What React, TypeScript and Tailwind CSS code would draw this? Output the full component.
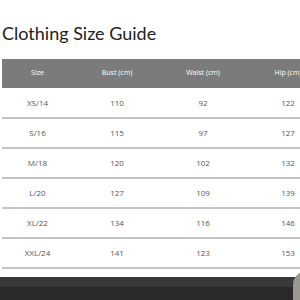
import React from "react";

const rows = [
  ["XS/14", "110", "92", "122"],
  ["S/16", "115", "97", "127"],
  ["M/18", "120", "102", "132"],
  ["L/20", "127", "109", "139"],
  ["XL/22", "134", "116", "146"],
  ["XXL/24", "141", "123", "153"],
];

const widths = ["w-[71px]", "w-[88px]", "w-[84px]", "w-[86px]"];

export default function App() {
  return (
    <div className="w-[300px] h-[300px] overflow-hidden bg-white flex flex-col" style={{ fontFamily: "'Open Sans', 'Noto Sans', sans-serif" }}>
      <div className="h-[20px]" />
      <div className="pl-[2px] h-[26px] flex items-center text-[18px] leading-none text-[#222]" style={{ fontFamily: "Lato, 'Open Sans', sans-serif" }}>
        Clothing Size Guide
      </div>
      <div className="h-[13px]" />
      <div className="ml-[2px] w-[340px] flex flex-col">
        <div className="flex h-[29px] bg-[#7b7b7b] text-white text-[7px] items-center">
          {["Size", "Bust (cm)", "Waist (cm)", "Hip (cm)"].map((h, i) => (
            <div key={h} className={`${widths[i]} shrink-0 text-center`}>{h}</div>
          ))}
        </div>
        {rows.map((r, idx) => (
          <div key={r[0]} className={`flex ${idx === 0 ? "h-[31px]" : "h-[30px]"} items-center border-b-[2px] border-[#c4c4c4] text-[8px] text-[#555]`}>
            {r.map((c, i) => (
              <div key={i} className={`${widths[i]} shrink-0 text-center`}>{c}</div>
            ))}
          </div>
        ))}
      </div>
      <div className="h-[8px]" />
      <div className="relative flex-1 flex flex-col">
        <div className="h-[10px] bg-[#383838]" />
        <div className="flex-1 bg-[#2a2a2a]" />
        <div className="absolute right-[-20px] top-[-6px] w-[27px] h-[40px] rounded-tl-[14px] bg-[#9a9890]" />
      </div>
    </div>
  );
}
